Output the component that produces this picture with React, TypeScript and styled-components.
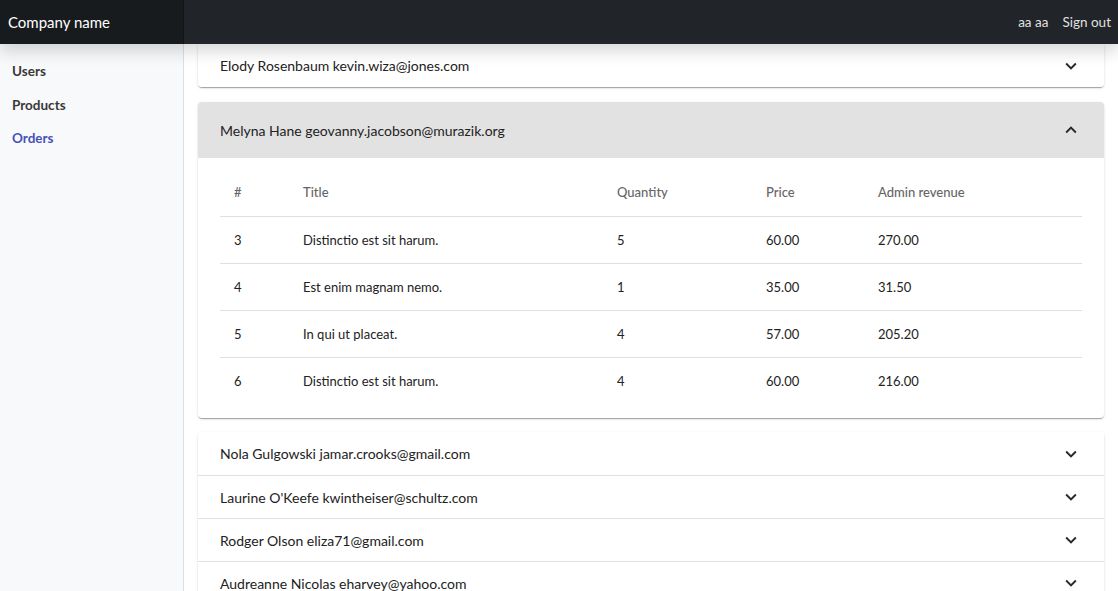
import React from "react";
import styled, { createGlobalStyle } from "styled-components";

type OrderLine = {
  id: number;
  title: string;
  quantity: number;
  price: string;
  revenue: string;
};

type Customer = {
  name: string;
  email: string;
  lines?: OrderLine[];
};

const customers: Customer[] = [
  { name: "Elody Rosenbaum", email: "kevin.wiza@jones.com" },
  {
    name: "Melyna Hane",
    email: "geovanny.jacobson@murazik.org",
    lines: [
      { id: 3, title: "Distinctio est sit harum.", quantity: 5, price: "60.00", revenue: "270.00" },
      { id: 4, title: "Est enim magnam nemo.", quantity: 1, price: "35.00", revenue: "31.50" },
      { id: 5, title: "In qui ut placeat.", quantity: 4, price: "57.00", revenue: "205.20" },
      { id: 6, title: "Distinctio est sit harum.", quantity: 4, price: "60.00", revenue: "216.00" },
    ],
  },
  { name: "Nola Gulgowski", email: "jamar.crooks@gmail.com" },
  { name: "Laurine O'Keefe", email: "kwintheiser@schultz.com" },
  { name: "Rodger Olson", email: "eliza71@gmail.com" },
  { name: "Audreanne Nicolas", email: "eharvey@yahoo.com" },
];

const GlobalStyle = createGlobalStyle`
  html, body {
    margin: 0;
    height: 591px;
    overflow: hidden;
    background: #fff;
    font-family: "Lato", "Noto Sans", "Liberation Sans", sans-serif;
    color: #212529;
  }
  * { box-sizing: border-box; }
`;

const Chevron = ({ up }: { up?: boolean }) => (
  <ChevronSvg viewBox="0 0 24 24">
    <path
      d={
        up
          ? "m12 8-6 6 1.41 1.41L12 10.83l4.59 4.58L18 14z"
          : "M16.59 8.59 12 13.17 7.41 8.59 6 10l6 6 6-6z"
      }
    />
  </ChevronSvg>
);

const OrdersTable = ({ lines }: { lines: OrderLine[] }) => (
  <Table>
    <HeadRow>
      <Cell>#</Cell>
      <Cell>Title</Cell>
      <Cell>Quantity</Cell>
      <Cell>Price</Cell>
      <Cell>Admin revenue</Cell>
    </HeadRow>
    {lines.map((l) => (
      <BodyRow key={l.id}>
        <Cell>{l.id}</Cell>
        <Cell>{l.title}</Cell>
        <Cell>{l.quantity}</Cell>
        <Cell>{l.price}</Cell>
        <Cell>{l.revenue}</Cell>
      </BodyRow>
    ))}
  </Table>
);

const App = () => {
  const first = customers[0];
  const open = customers[1];
  const rest = customers.slice(2);

  return (
    <>
      <GlobalStyle />
      <Page>
        <TopBar>
          <Brand>Company name</Brand>
          <TopLinks>
            <TopLink>aa aa</TopLink>
            <TopLink>Sign out</TopLink>
          </TopLinks>
        </TopBar>
        <Body>
          <Sidebar>
            <NavLink>Users</NavLink>
            <NavLink>Products</NavLink>
            <NavLink active>Orders</NavLink>
          </Sidebar>
          <Main>
            <Group roundBottom>
              <Summary>
                <span>
                  {first.name} {first.email}
                </span>
                <Chevron />
              </Summary>
            </Group>

            <Group expanded roundTop roundBottom>
              <Summary expanded>
                <span>
                  {open.name} {open.email}
                </span>
                <Chevron up />
              </Summary>
              <Details>
                <OrdersTable lines={open.lines || []} />
              </Details>
            </Group>

            <Group roundTop>
              {rest.map((c, i) => (
                <Summary key={c.email} divided={i > 0}>
                  <span>
                    {c.name} {c.email}
                  </span>
                  <Chevron />
                </Summary>
              ))}
            </Group>
          </Main>
        </Body>
      </Page>
    </>
  );
};

export default App;

const Page = styled.div`
  height: 591px;
  display: flex;
  flex-direction: column;
`;

const TopBar = styled.header`
  position: relative;
  z-index: 2;
  flex: 0 0 44px;
  display: flex;
  align-items: stretch;
  justify-content: space-between;
  background: #212529;
  box-shadow: 0 8px 16px rgba(0, 0, 0, 0.15);
`;

const Brand = styled.div`
  width: 184px;
  display: flex;
  align-items: center;
  padding-left: 8px;
  font-size: 15px;
  color: #fff;
  background: rgba(0, 0, 0, 0.25);
  box-shadow: inset -1px 0 0 rgba(0, 0, 0, 0.25);
`;

const TopLinks = styled.nav`
  display: flex;
  align-items: center;
  gap: 14px;
  padding-right: 7px;
`;

const TopLink = styled.span`
  font-size: 13.5px;
  color: rgba(255, 255, 255, 0.88);
`;

const Body = styled.div`
  flex: 1;
  display: flex;
  min-height: 0;
`;

const Sidebar = styled.aside`
  flex: 0 0 184px;
  display: flex;
  flex-direction: column;
  padding-top: 11px;
  background: #f8f9fa;
  box-shadow: inset -1px 0 0 rgba(0, 0, 0, 0.1);
`;

const NavLink = styled.a<{ active?: boolean }>`
  display: block;
  padding: 8px 12px;
  line-height: 17.5px;
  font-size: 13.5px;
  font-weight: 700;
  color: ${({ active }) => (active ? "#4751b8" : "#383838")};
`;

const Main = styled.main`
  flex: 1;
  padding: 0 14px;
  overflow: hidden;
`;

const Group = styled.section<{ expanded?: boolean; roundTop?: boolean; roundBottom?: boolean }>`
  background: #fff;
  margin: ${({ expanded }) => (expanded ? "15px 0 14px" : "0")};
  border-radius: ${({ roundTop, roundBottom }) =>
    `${roundTop ? 4 : 0}px ${roundTop ? 4 : 0}px ${roundBottom ? 4 : 0}px ${roundBottom ? 4 : 0}px`};
  box-shadow: 0 2px 1px -1px rgba(0, 0, 0, 0.2), 0 1px 1px 0 rgba(0, 0, 0, 0.14),
    0 1px 3px 0 rgba(0, 0, 0, 0.12);
  overflow: hidden;
`;

const Summary = styled.div<{ expanded?: boolean; divided?: boolean }>`
  height: ${({ expanded }) => (expanded ? 56 : 43)}px;
  display: flex;
  align-items: center;
  justify-content: space-between;
  padding: 0 22px 0 22px;
  font-size: 14px;
  color: #222;
  background: ${({ expanded }) => (expanded ? "#e2e2e2" : "#fff")};
  border-top: ${({ divided }) => (divided ? "1px solid rgba(0, 0, 0, 0.12)" : "none")};
`;

const ChevronSvg = styled.svg`
  width: 22px;
  height: 22px;
  fill: #2a2a2a;
  flex: 0 0 22px;
`;

const Details = styled.div`
  padding: 9px 22px 14px;
`;

const Table = styled.div`
  display: flex;
  flex-direction: column;
`;

const Row = styled.div`
  display: grid;
  grid-template-columns: 69px 314px 149px 112px 1fr;
  align-items: center;
  font-size: 13px;
`;

const HeadRow = styled(Row)`
  height: 50px;
  color: #666;
  font-weight: 500;
  border-bottom: 1px solid #e0e0e0;
`;

const BodyRow = styled(Row)`
  height: 47px;
  color: #222;
  border-bottom: 1px solid #e0e0e0;
  &:last-child {
    border-bottom: none;
    height: 46px;
  }
`;

const Cell = styled.div`
  padding-left: 14px;
`;
